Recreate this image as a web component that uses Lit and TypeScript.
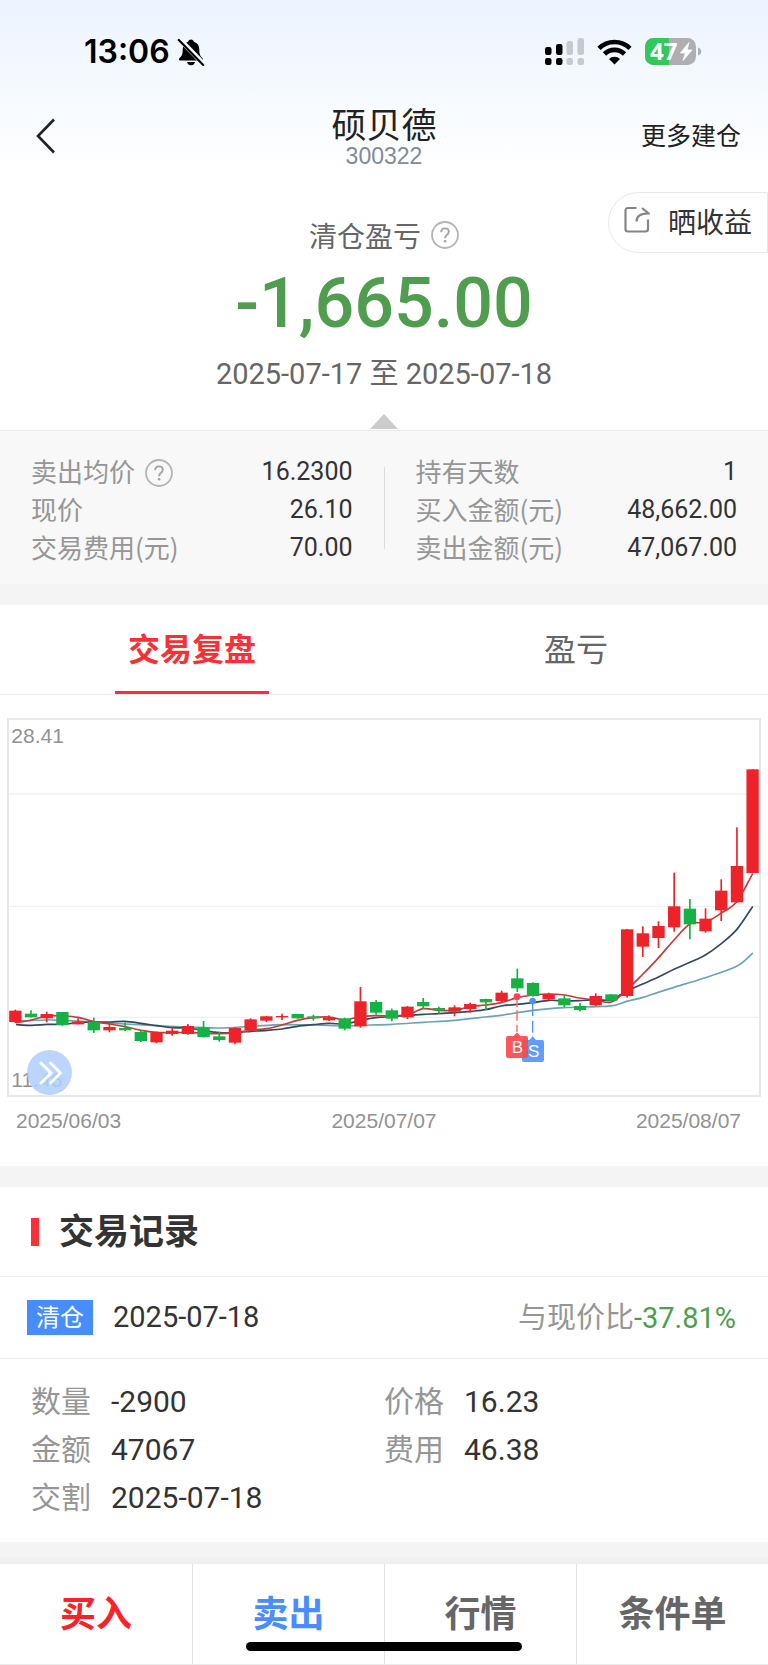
import { LitElement, html, svg, css } from "lit";
import { customElement, property, state } from "lit/decorators.js";
import { classMap } from "lit/directives/class-map.js";

type Candle = [dir: "r" | "g", top: number, bottom: number, high: number, low: number];
type Point = [number, number];

const CANDLES: Candle[] = [
  ["r", 932, 966, 929, 969], ["g", 941, 952, 931, 952], ["r", 942, 955, 935, 967], ["g", 936, 975, 936, 977],
  ["r", 965, 973, 955, 973], ["g", 966, 991, 953, 999], ["r", 981, 991, 972, 997], ["g", 984, 991, 967, 993],
  ["g", 996, 1023, 991, 1026], ["r", 997, 1027, 995, 1030], ["r", 992, 1002, 981, 1007], ["r", 978, 1002, 972, 1004],
  ["g", 982, 1011, 963, 1013], ["g", 1009, 1020, 995, 1025], ["r", 984, 1028, 982, 1033], ["r", 958, 990, 955, 992],
  ["r", 949, 962, 948, 966], ["r", 948, 952, 941, 960], ["g", 942, 955, 942, 956], ["g", 949, 955, 944, 962],
  ["r", 952, 961, 946, 963], ["g", 955, 986, 953, 991], ["r", 904, 979, 861, 983], ["g", 906, 938, 900, 944],
  ["g", 931, 956, 926, 964], ["r", 920, 952, 918, 957], ["g", 906, 919, 894, 927], ["g", 924, 931, 920, 941],
  ["r", 922, 935, 916, 949], ["r", 912, 927, 908, 938], ["g", 897, 907, 896, 930], ["r", 878, 903, 872, 907],
  ["g", 835, 865, 806, 876], ["g", 849, 888, 847, 890], ["r", 882, 898, 878, 901], ["g", 895, 916, 885, 921],
  ["g", 918, 930, 909, 934], ["r", 888, 916, 880, 918], ["g", 883, 902, 882, 904], ["r", 688, 888, 687, 893],
  ["r", 700, 740, 679, 771], ["r", 678, 714, 664, 744], ["r", 619, 682, 518, 695], ["g", 626, 673, 597, 718],
  ["r", 656, 694, 625, 698], ["r", 572, 631, 538, 663], ["r", 498, 607, 382, 609], ["r", 208, 519, 207, 520],
];

const MA_SHORT: Point[] = [
  [50, 968], [95, 960], [140, 948], [188, 948], [234, 952], [282, 965], [330, 972], [375, 980], [423, 991], [470, 997],
  [517, 998], [566, 997], [611, 1000], [657, 1001], [705, 998], [753, 991], [801, 986], [846, 975], [892, 961],
  [940, 953], [988, 951], [1034, 960], [1079, 950], [1128, 947], [1176, 948], [1224, 944], [1270, 926], [1316, 931],
  [1364, 931], [1411, 920], [1457, 915], [1503, 908], [1551, 893], [1599, 885], [1648, 882], [1693, 885], [1738, 894],
  [1787, 900], [1835, 906], [1880, 870], [1926, 825], [1974, 775], [2022, 720], [2070, 672], [2116, 667], [2161, 641],
  [2210, 605], [2257, 523],
];
const MA_MID: Point[] = [
  [50, 974], [95, 976], [142, 973], [188, 973], [234, 968], [282, 966], [330, 966], [375, 964], [423, 970], [470, 977],
  [517, 983], [566, 984], [611, 992], [657, 998], [705, 997], [753, 994], [801, 991], [846, 987], [892, 979],
  [940, 974], [988, 970], [1034, 972], [1079, 962], [1128, 953], [1176, 950], [1224, 946], [1270, 943], [1316, 941],
  [1364, 938], [1411, 934], [1457, 929], [1503, 918], [1551, 913], [1599, 908], [1648, 901], [1693, 903], [1738, 902],
  [1787, 899], [1835, 901], [1860, 885], [1880, 873], [1926, 853], [1974, 832], [2022, 808], [2070, 787], [2116, 765],
  [2161, 733], [2210, 689], [2257, 621],
];
const MA_LONG: Point[] = [
  [50, 963], [142, 960], [188, 961], [282, 966], [375, 972], [470, 977], [566, 981], [657, 984], [753, 979],
  [846, 974], [940, 975], [1034, 978], [1079, 976], [1176, 973], [1270, 967], [1364, 961], [1457, 951], [1503, 946],
  [1599, 931], [1693, 923], [1787, 920], [1840, 917], [1880, 904], [1926, 893], [1974, 877], [2022, 862],
  [2116, 833], [2210, 799], [2257, 760],
];

const FIRST_X = 46;
const STEP_X = 47.06;

// Catmull-Rom spline through the points, written as cubic segments.
function smooth(points: Point[]): string {
  let d = `M${points[0][0]} ${points[0][1]}`;
  for (let i = 0; i < points.length - 1; i++) {
    const a = points[Math.max(i - 1, 0)];
    const b = points[i];
    const c = points[i + 1];
    const e = points[Math.min(i + 2, points.length - 1)];
    d += `C${b[0] + (c[0] - a[0]) / 6} ${b[1] + (c[1] - a[1]) / 6} ${c[0] - (e[0] - b[0]) / 6} ${c[1] - (e[1] - b[1]) / 6} ${c[0]} ${c[1]}`;
  }
  return d;
}

const helpIcon = html`<svg class="help" viewBox="0 0 28 28" aria-hidden="true">
  <circle cx="14" cy="14" r="13" fill="none" stroke="#b4b4b4" stroke-width="1.8" />
  <path d="M10.200 11.200c0-2.300 1.600-3.800 3.800-3.800s3.800 1.400 3.800 3.400c0 1.500-.8 2.300-2 3.200-1.200 1-1.700 1.600-1.700 3.200" fill="none" stroke="#a4a4a4" stroke-width="1.900" />
  <circle cx="14.100" cy="20.200" r="1.300" fill="#a4a4a4" />
</svg>`;

@customElement("status-bar")
export class StatusBar extends LitElement {
  static styles = css`
    :host {
      display: flex;
      align-items: center;
      justify-content: space-between;
      height: 104px;
      padding: 0 66px 0 84px;
      color: #000;
    }
    .side {
      display: flex;
      align-items: center;
    }
    .left {
      gap: 7px;
    }
    .right {
      gap: 13px;
    }
    .time {
      font: 600 32px/40px Inter, "Liberation Sans", sans-serif;
    }
    .charge {
      font: 700 24px "Open Sans", Inter, sans-serif;
    }
    svg {
      display: block;
    }
  `;
  render() {
    return html`
      <div class="side left">
        <span class="time">13:06</span>
        <svg width="28" height="28" viewBox="0 0 28 28" aria-label="静音">
          <path d="M14 1.500c1.700 0 2.600 1 2.900 2.300 3.600 1.100 5.400 3.900 5.400 7.600 0 5.500 1.200 6.600 3.300 8.800.9 1 .5 2.200-.9 2.200H3.300c-1.400 0-1.800-1.200-.9-2.200 2.100-2.200 3.300-3.300 3.300-8.800 0-3.700 1.800-6.500 5.400-7.600C11.400 2.500 12.300 1.500 14 1.500z" />
          <path d="M10 24h8c-.4 2-2 3.300-4 3.300S10.400 26 10 24z" />
          <path d="M2.500 1.200 27 26.400" stroke="#f3f7ff" stroke-width="5" />
          <path d="M1.800 2 26.200 27" stroke="#000" stroke-width="2.200" stroke-linecap="round" />
        </svg>
      </div>
      <div class="side right">
        <svg width="39" height="28" viewBox="0 0 39 28" aria-label="信号">
          <rect x="0" y="9" width="6.500" height="8" rx="2.200" />
          <rect x="0" y="20" width="6.500" height="7" rx="2.200" />
          <rect x="11" y="6" width="6.500" height="11" rx="2.200" />
          <rect x="11" y="20" width="6.500" height="7" rx="2.200" />
          <g fill="#c6c9d0">
            <rect x="21.500" y="3" width="6.500" height="14" rx="2.200" />
            <rect x="21.500" y="20" width="6.500" height="7" rx="2.200" />
            <rect x="32.500" y="0" width="6.500" height="17" rx="2.200" />
            <rect x="32.500" y="20" width="6.500" height="7" rx="2.200" />
          </g>
        </svg>
        <svg width="35" height="26" viewBox="0 0 35 26" aria-label="无线网络">
          <g fill="none" stroke="#000" stroke-width="4.600">
            <path d="M2 9.400a22 22 0 0 1 31 0" />
            <path d="M7.500 15a14.200 14.200 0 0 1 20 0" />
          </g>
          <path d="M17.500 25.500 12 20a7.800 7.800 0 0 1 11 0z" />
        </svg>
        <svg width="57" height="42" viewBox="0 -7 57 42" aria-label="电量">
          <defs>
            <clipPath id="cell"><rect width="51" height="27" rx="8.500" /></clipPath>
          </defs>
          <g clip-path="url(#cell)">
            <rect width="51" height="27" fill="#aeafb3" />
            <rect width="24" height="27" fill="#34c759" />
          </g>
          <path d="M53 9.500c2 .4 3.200 2 3.200 4s-1.200 3.600-3.200 4z" fill="#aeafb3" />
          <text class="charge" x="5" y="22" fill="#fff">47</text>
          <path d="M44 4.500 35.500 15h5L38 22.500 47 12h-5z" fill="#fff" stroke="#fff" stroke-width=".8" stroke-linejoin="round" />
        </svg>
      </div>
    `;
  }
}

@customElement("candle-chart")
export class CandleChart extends LitElement {
  static styles = css`
    :host {
      display: block;
      padding: 23px 7px 32px;
      font: 21px/26px "Liberation Sans", Arial, sans-serif;
      color: #929292;
    }
    .plot {
      position: relative;
    }
    .canvas {
      display: block;
      width: 100%;
    }
    .axis {
      font-size: 63px;
      fill: #929292;
    }
    .tag {
      font-size: 51px;
      fill: #fff;
      text-anchor: middle;
    }
    .expand {
      position: absolute;
      left: 20px;
      bottom: 2px;
      width: 45px;
      height: 45px;
      padding: 0;
      border: 0;
      border-radius: 50%;
      background: rgba(176, 206, 255, 0.86);
      display: grid;
      place-items: center;
    }
    .dates {
      display: grid;
      grid-template-columns: 1fr auto 1fr;
      padding: 0 9px;
      margin-top: 11px;
    }
    .last {
      padding-right: 11px;
      text-align: right;
    }
  `;

  render() {
    return html`
      <div class="plot">
        <svg class="canvas" viewBox="21 54 2262 1137" role="img" aria-label="K线图">
          <g stroke="#f0f0f8" stroke-width="4">
            <path d="M27 282H2277M27 619H2277M27 952H2277" />
          </g>
          <rect x="24" y="57" width="2256" height="1131" fill="none" stroke="#e7e7ec" stroke-width="6" />
          <text class="axis" x="34" y="130">28.41</text>
          <text class="axis" x="34" y="1160">11.46</text>
          <g fill="none" stroke-width="5" stroke-linecap="round">
            <path d=${smooth(MA_LONG)} stroke="#6ba6ac" />
            <path d=${smooth(MA_MID)} stroke="#34495c" />
            <path d=${smooth(MA_SHORT)} stroke="#c63a39" />
          </g>
          ${CANDLES.map(([dir, top, bottom, high, low], i) => {
            const x = FIRST_X + i * STEP_X;
            const fill = dir === "r" ? "#ee232a" : "#15b144";
            const left = Math.max(x - 18.5, 27);
            const right = Math.min(x + 18.5, 2277);
            return svg`
              <rect x=${left} y=${top} width=${right - left} height=${bottom - top} fill=${fill} />
              <rect x=${x - 2.5} y=${high} width="5" height=${low - high} fill=${fill} />`;
          })}
          <path d="M1598 912V1012" stroke="#4e93ff" stroke-width="4" stroke-dasharray="36 14" />
          <circle cx="1598" cy="903" r="10" fill="#4a90ff" />
          <path d="M1572 1020H1588L1598 1009 1608 1020H1626a6 6 0 0 1 6 6V1080a6 6 0 0 1-6 6H1572a6 6 0 0 1-6-6V1026a6 6 0 0 1 6-6z" fill="#5f9dff" />
          <text class="tag" x="1601" y="1072">S</text>
          <path d="M1551 900V1000" stroke="#ff6467" stroke-width="4" stroke-dasharray="22 8 32 12" />
          <circle cx="1551" cy="890" r="10" fill="#fb474c" />
          <path d="M1524 1008H1541L1551 997 1561 1008H1578a6 6 0 0 1 6 6V1068a6 6 0 0 1-6 6H1524a6 6 0 0 1-6-6V1014a6 6 0 0 1 6-6z" fill="#fc484e" fill-opacity=".93" />
          <text class="tag" x="1552" y="1060">B</text>
        </svg>
        <button class="expand" aria-label="展开">
          <svg width="24" height="24" viewBox="0 0 24 24" fill="none" stroke="#fff" stroke-width="3" stroke-linecap="round">
            <path d="M3 2 13 12 3 22M12.500 2 22.500 12 12.500 22" />
          </svg>
        </button>
      </div>
      <div class="dates">
        <span>2025/06/03</span>
        <span>2025/07/07</span>
        <span class="last">2025/08/07</span>
      </div>
    `;
  }
}

@customElement("fact-list")
export class FactList extends LitElement {
  @property({ attribute: false }) rows: { label: string; value: string; help?: boolean }[] = [];
  static styles = css`
    .list {
      margin: 0;
    }
    .row {
      display: flex;
      justify-content: space-between;
      align-items: flex-start;
      height: 38px;
      line-height: 38px;
    }
    .label {
      display: flex;
      align-items: center;
      gap: 10px;
      font-size: 26px;
      line-height: 36px;
      color: #969696;
    }
    .value {
      margin: 0;
      font-family: Roboto, sans-serif;
      font-size: 25px;
      color: #333;
    }
    .help {
      width: 28px;
      height: 28px;
      margin-top: 4px;
    }
  `;
  render() {
    return html`<dl class="list">
      ${this.rows.map(
        (r) => html`<div class="row">
          <dt class="label">${r.label}${r.help ? helpIcon : ""}</dt>
          <dd class="value">${r.value}</dd>
        </div>`,
      )}
    </dl>`;
  }
}

@customElement("app-root")
export class AppRoot extends LitElement {
  @state() private tab = 0;

  static styles = css`
    :host {
      display: block;
      background: #fff;
      color: #333;
      font-family: "Noto Sans CJK SC", sans-serif;
      overflow: hidden;
    }
    button {
      margin: 0;
      padding: 0;
      border: 0;
      background: none;
      color: inherit;
      font: inherit;
    }
    .top {
      background: linear-gradient(#edf4ff, #f5f9ff 50%, #fff);
    }
    .nav {
      display: grid;
      grid-template-columns: 1fr auto 1fr;
      align-items: center;
      padding: 0 27px;
    }
    .back {
      justify-self: start;
      display: block;
      padding-left: 8px;
    }
    .back svg {
      display: block;
    }
    .title {
      text-align: center;
    }
    .name {
      margin: 0;
      font-size: 35px;
      line-height: 38px;
      font-weight: 400;
      color: #222;
    }
    .code {
      margin: 3px 0 0;
      font: 23px/23px "Liberation Sans", Arial, sans-serif;
      color: #7f8b98;
    }
    .more {
      justify-self: end;
      padding-bottom: 4px;
      font-size: 25px;
      line-height: 36px;
      color: #222;
    }
    .caption-row {
      display: grid;
      grid-template-columns: 1fr auto 1fr;
      padding-top: 24px;
    }
    .caption {
      grid-column: 2;
      align-self: end;
      display: flex;
      align-items: center;
      gap: 10px;
      font-size: 28px;
      line-height: 36px;
      color: #666;
    }
    .help {
      width: 28px;
      height: 28px;
    }
    .share {
      justify-self: end;
      display: flex;
      align-items: center;
      gap: 18px;
      box-sizing: border-box;
      height: 61px;
      padding: 0 15px 4px;
      border: 1px solid #e8e8e8;
      border-radius: 31px 0 0 31px;
      font-size: 28px;
      color: #333;
    }
    .share svg {
      margin-top: -2px;
    }
    .amount {
      margin: 10px 0 0;
      text-align: center;
      font: 500 70px/80px Roboto, sans-serif;
      color: #519d4f;
    }
    .period {
      margin: 14px 0 0;
      text-align: center;
      font-family: Roboto, "Noto Sans CJK SC", sans-serif;
      font-size: 29px;
      line-height: 34px;
      color: #666;
    }
    .fold {
      display: block;
      margin: 23px auto 1px;
    }
    .summary {
      display: grid;
      grid-template-columns: 1fr 1px 1fr;
      column-gap: 31px;
      padding: 22px 31px 17px;
      border-top: 1px solid #ebebeb;
      background: #f8f8f8;
    }
    .rule {
      margin: 14px 0 18px;
      background: #dcdcdc;
    }
    .band {
      height: 21px;
      background: #f4f4f4;
    }
    .tabs {
      display: grid;
      grid-template-columns: 1fr 1fr;
      border-bottom: 1px solid #ebebeb;
    }
    .tab {
      position: relative;
      height: 89px;
      padding-bottom: 6px;
      font-size: 32px;
      color: #666;
    }
    .tab.on {
      color: #fb2f36;
      font-weight: 700;
    }
    .tab.on::after {
      content: "";
      position: absolute;
      left: 30%;
      right: 30%;
      bottom: 0;
      height: 3px;
      background: #fb2f36;
    }
    .heading {
      display: flex;
      align-items: center;
      gap: 20px;
      height: 89px;
      margin: 0;
      padding: 0 31px;
      border-bottom: 1px solid #ebebeb;
      font-size: 35px;
      font-weight: 700;
      color: #333;
    }
    .heading::before {
      content: "";
      width: 8px;
      height: 28px;
      background: #fb2f36;
    }
    .heading span {
      padding-bottom: 6px;
    }
    .record {
      display: flex;
      align-items: center;
      height: 81px;
      padding: 0 32px 0 27px;
      border-bottom: 1px solid #ebebeb;
      font-size: 29px;
    }
    .badge {
      padding: 0 9px 4px;
      background: #478dff;
      color: #fff;
      font-size: 24px;
      line-height: 31px;
    }
    .num {
      font-family: Roboto, sans-serif;
    }
    .when {
      margin-left: 20px;
      padding-bottom: 2px;
    }
    .versus {
      margin-left: auto;
      padding-bottom: 6px;
      color: #969696;
    }
    .down {
      color: #519d4f;
    }
    .details {
      display: grid;
      grid-template-columns: 1fr 1fr;
      margin: 0;
      padding: 19px 31px 20px;
      font-size: 30px;
      line-height: 48px;
    }
    .pair {
      display: flex;
      gap: 20px;
      height: 48px;
    }
    .pair dt {
      line-height: 43px;
      color: #969696;
    }
    .pair dd {
      margin: 0;
    }
    .shade {
      height: 22px;
      background: linear-gradient(#f4f4f4 60%, #ededed);
    }
    .actions {
      position: relative;
      display: grid;
      grid-template-columns: repeat(4, 1fr);
      border-bottom: 1px solid #ebebeb;
    }
    .action {
      height: 100px;
      padding-bottom: 6px;
      font-size: 36px;
      font-weight: 700;
      color: #666;
    }
    .action + .action {
      border-left: 1px solid #e2e2e2;
    }
    .action.buy {
      color: #ff2029;
    }
    .action.sell {
      color: #4a8dff;
    }
    .home {
      position: absolute;
      left: 32%;
      right: 32%;
      bottom: 13px;
      height: 9px;
      border-radius: 5px;
      background: #000;
    }
  `;

  private left = [
    { label: "卖出均价", value: "16.2300", help: true },
    { label: "现价", value: "26.10" },
    { label: "交易费用(元)", value: "70.00" },
  ];
  private right = [
    { label: "持有天数", value: "1" },
    { label: "买入金额(元)", value: "48,662.00" },
    { label: "卖出金额(元)", value: "47,067.00" },
  ];
  private details = [
    ["数量", "-2900"],
    ["价格", "16.23"],
    ["金额", "47067"],
    ["费用", "46.38"],
    ["交割", "2025-07-18"],
  ];

  render() {
    return html`
      <header class="top">
        <status-bar></status-bar>
        <nav class="nav">
          <button class="back" aria-label="返回">
            <svg width="22" height="36" viewBox="0 0 22 36" fill="none" stroke="#222" stroke-width="2.600">
              <path d="M19 1.500 3 18 19 34.500" />
            </svg>
          </button>
          <div class="title">
            <h1 class="name">硕贝德</h1>
            <p class="code">300322</p>
          </div>
          <button class="more">更多建仓</button>
        </nav>
      </header>

      <section>
        <div class="caption-row">
          <div class="caption">清仓盈亏${helpIcon}</div>
          <button class="share">
            <svg width="26" height="28" viewBox="0 0 26 28" fill="none" stroke="#858585" stroke-width="2.200">
              <path d="M12.500 2H4a2.500 2.500 0 0 0-2.500 2.500V23A2.500 2.500 0 0 0 4 25.500H21.500A2.500 2.500 0 0 0 24 23V13.500" />
              <path d="M12.500 15.500C12.500 10.500 16 7.500 24 7.500H24.500L18 2" />
            </svg>
            晒收益
          </button>
        </div>
        <p class="amount">-1,665.00</p>
        <p class="period">2025-07-17 至 2025-07-18</p>
        <svg class="fold" width="28" height="15" viewBox="0 0 28 15"><path d="M14 0 28 15H0z" fill="#cbcbcb" /></svg>
      </section>

      <section class="summary">
        <fact-list .rows=${this.left}></fact-list>
        <div class="rule"></div>
        <fact-list .rows=${this.right}></fact-list>
      </section>
      <div class="band"></div>

      <div class="tabs" role="tablist">
        ${["交易复盘", "盈亏"].map(
          (name, i) => html`<button
            role="tab"
            aria-selected=${this.tab === i}
            class=${classMap({ tab: true, on: this.tab === i })}
            @click=${() => (this.tab = i)}
          >${name}</button>`,
        )}
      </div>
      <candle-chart></candle-chart>
      <div class="band"></div>

      <section>
        <h2 class="heading"><span>交易记录</span></h2>
        <div class="record">
          <span class="badge">清仓</span>
          <span class="num when">2025-07-18</span>
          <span class="versus">与现价比<span class="num down">-37.81%</span></span>
        </div>
        <dl class="details">
          ${this.details.map(([k, v]) => html`<div class="pair"><dt>${k}</dt><dd class="num">${v}</dd></div>`)}
        </dl>
      </section>
      <div class="band shade"></div>

      <footer class="actions">
        <button class="action buy">买入</button>
        <button class="action sell">卖出</button>
        <button class="action">行情</button>
        <button class="action">条件单</button>
        <div class="home"></div>
      </footer>
    `;
  }
}
